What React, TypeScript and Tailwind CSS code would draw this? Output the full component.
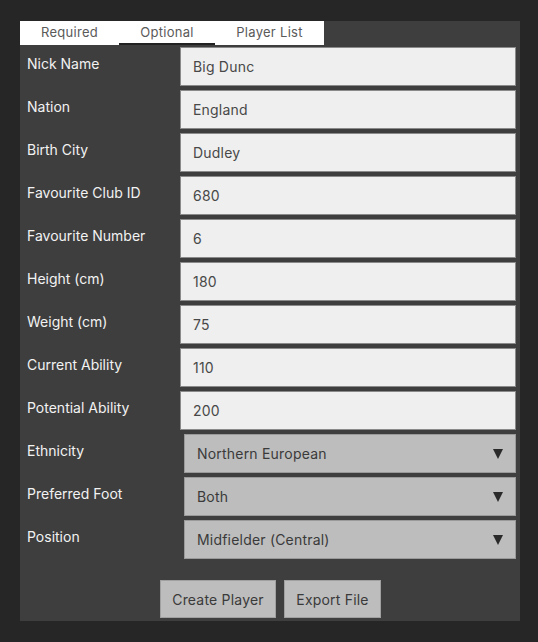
import React from "react";

const inputs: [string, string][] = [
  ["Nick Name", "Big Dunc"],
  ["Nation", "England"],
  ["Birth City", "Dudley"],
  ["Favourite Club ID", "680"],
  ["Favourite Number", "6"],
  ["Height (cm)", "180"],
  ["Weight (cm)", "75"],
  ["Current Ability", "110"],
  ["Potential Ability", "200"],
];

const selects: [string, string][] = [
  ["Ethnicity", "Northern European"],
  ["Preferred Foot", "Both"],
  ["Position", "Midfielder (Central)"],
];

export default function App() {
  return (
    <div
      className="w-[538px] h-[642px] bg-[#262626] pt-[21px] pl-[20px]"
      style={{ fontFamily: "Inter, 'Noto Sans', sans-serif" }}
    >
      <div className="w-[500px] h-[600px] bg-[#3e3e3e] flex flex-col">
        <div className="flex w-[304px] h-[24px] bg-white text-[13px] text-[#5a5a5a] tracking-[0.3px]">
          <div className="w-[99px] flex items-center justify-center">Required</div>
          <div className="w-[96px] flex items-center justify-center border-b-2 border-[#222] pt-[2px]">Optional</div>
          <div className="w-[109px] flex items-center justify-center">Player List</div>
        </div>
        <div className="flex flex-col gap-[4px] mt-[2px]">
          {inputs.map(([label, value]) => (
            <div key={label} className="flex h-[39px]">
              <div className="w-[160px] pl-[7px] pt-[8px] text-[14px] text-[#f2f2f2] leading-[17px]">{label}</div>
              <div className="w-[336px] h-[39px] bg-[#efefef] border border-[#8a8a8a] flex items-center pl-[12px] text-[14px] text-[#484848] tracking-[0.2px]">
                {value}
              </div>
            </div>
          ))}
          {selects.map(([label, value]) => (
            <div key={label} className="flex h-[39px]">
              <div className="w-[164px] pl-[7px] pt-[8px] text-[14px] text-[#f2f2f2] leading-[17px]">{label}</div>
              <div className="w-[332px] h-[39px] bg-[#bdbdbd] border border-[#9a9a9a] flex items-center justify-between pl-[12px] pr-[12px] text-[14px] text-[#3a3a3a] tracking-[0.2px]">
                <span>{value}</span>
                <svg width="10" height="10" viewBox="0 0 10 10">
                  <polygon points="0,0 10,0 5,10" fill="#2a2a2a" />
                </svg>
              </div>
            </div>
          ))}
        </div>
        <div className="flex gap-[8px] mt-[21px] pl-[140px]">
          <div className="w-[116px] h-[38px] bg-[#bdbdbd] border border-[#a0a0a0] flex items-center justify-center text-[14px] text-[#3a3a3a] tracking-[0.2px]">
            Create Player
          </div>
          <div className="w-[97px] h-[38px] bg-[#bdbdbd] border border-[#a0a0a0] flex items-center justify-center text-[14px] text-[#3a3a3a] tracking-[0.2px]">
            Export File
          </div>
        </div>
      </div>
    </div>
  );
}
